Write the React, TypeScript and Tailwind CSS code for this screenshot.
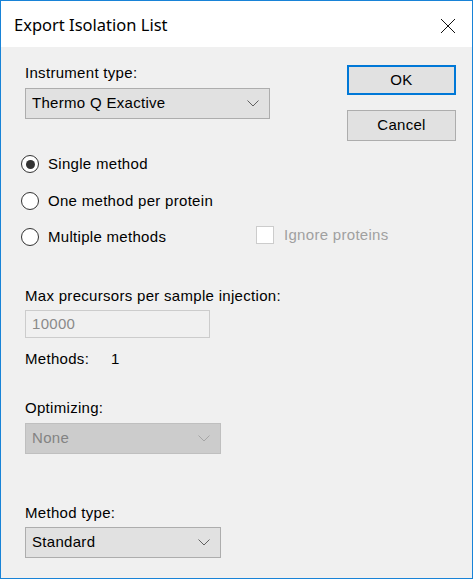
import React from "react";

const font = { fontFamily: '"Liberation Sans", Arial, sans-serif' };

function Chevron({ color = "#606060" }: { color?: string }) {
  return (
    <svg width="12" height="7" viewBox="0 0 12 7" fill="none">
      <path d="M0.5 0.5 L6 6 L11.5 0.5" stroke={color} strokeWidth="1" />
    </svg>
  );
}

function Combo({ value, width, disabled }: { value: string; width: string; disabled?: boolean }) {
  return (
    <div
      className={`${width} h-[31px] flex items-center justify-between pl-[6px] pr-[10px] border ${
        disabled ? "bg-[#cccccc] border-[#bfbfbf] text-[#838383]" : "bg-[#e1e1e1] border-[#adadad] text-black"
      }`}
    >
      <span>{value}</span>
      <Chevron color={disabled ? "#a6a6a6" : "#606060"} />
    </div>
  );
}

function Radio({ label, checked }: { label: string; checked?: boolean }) {
  return (
    <div className="flex items-center h-[20px] -ml-[4px]">
      <div className="w-[18px] h-[18px] rounded-full border border-[#333333] bg-white flex items-center justify-center">
        {checked && <div className="w-[9px] h-[9px] rounded-full bg-[#333333]" />}
      </div>
      <span className="ml-[9px]">{label}</span>
    </div>
  );
}

export default function App() {
  return (
    <div
      className="w-[473px] h-[579px] border border-[#1883d7] bg-[#f0f0f0] flex flex-col text-[15px] tracking-[0.3px] text-black whitespace-nowrap"
      style={font}
    >
      <div className="h-[46px] bg-white flex items-center justify-between pl-[13px] pr-[16px] pt-[3px]">
        <span
          className="text-[16.5px] tracking-normal"
          style={{ fontFamily: '"Noto Sans", "Open Sans", sans-serif' }}
        >
          Export Isolation List
        </span>
        <svg width="16" height="16" viewBox="0 0 16 16">
          <path d="M1 1 L15 15 M15 1 L1 15" stroke="#111" strokeWidth="1" />
        </svg>
      </div>

      <div className="flex pl-[24px] pr-[16px]">
        <div className="flex flex-col flex-1 min-w-0">
          <div className="mt-[17px] leading-[18px]">Instrument type:</div>
          <div className="mt-[6px]">
            <Combo value="Thermo Q Exactive" width="w-[245px]" />
          </div>

          <div className="mt-[35px]">
            <Radio label="Single method" checked />
          </div>
          <div className="mt-[17px]">
            <Radio label="One method per protein" />
          </div>
          <div className="mt-[16px] flex items-center">
            <div className="w-[231px] shrink-0">
              <Radio label="Multiple methods" />
            </div>
            <div className="flex items-center -mt-[4px] shrink-0">
              <div className="w-[18px] h-[18px] border border-[#cccccc] bg-white" />
              <span className="ml-[10px] text-[#a0a0a0]">Ignore proteins</span>
            </div>
          </div>

          <div className="mt-[40px] leading-[18px]">Max precursors per sample injection:</div>
          <div className="mt-[5px] w-[185px] h-[28px] border border-[#cccccc] bg-[#f0f0f0] flex items-center pl-[6px] text-[#8a8a8a]">
            10000
          </div>
          <div className="mt-[12px] leading-[18px] flex">
            <span className="w-[86px]">Methods:</span>
            <span>1</span>
          </div>

          <div className="mt-[31px] leading-[18px]">Optimizing:</div>
          <div className="mt-[6px]">
            <Combo value="None" width="w-[196px]" disabled />
          </div>

          <div className="mt-[50px] leading-[18px]">Method type:</div>
          <div className="mt-[5px]">
            <Combo value="Standard" width="w-[196px]" />
          </div>
        </div>

        <div className="flex flex-col pt-[18px] w-[109px] shrink-0">
          <button className="h-[30px] border-2 border-[#0078d7] bg-[#e1e1e1] text-[15px]">OK</button>
          <button className="mt-[15px] h-[31px] border border-[#adadad] bg-[#e1e1e1] text-[15px]">Cancel</button>
        </div>
      </div>
    </div>
  );
}
